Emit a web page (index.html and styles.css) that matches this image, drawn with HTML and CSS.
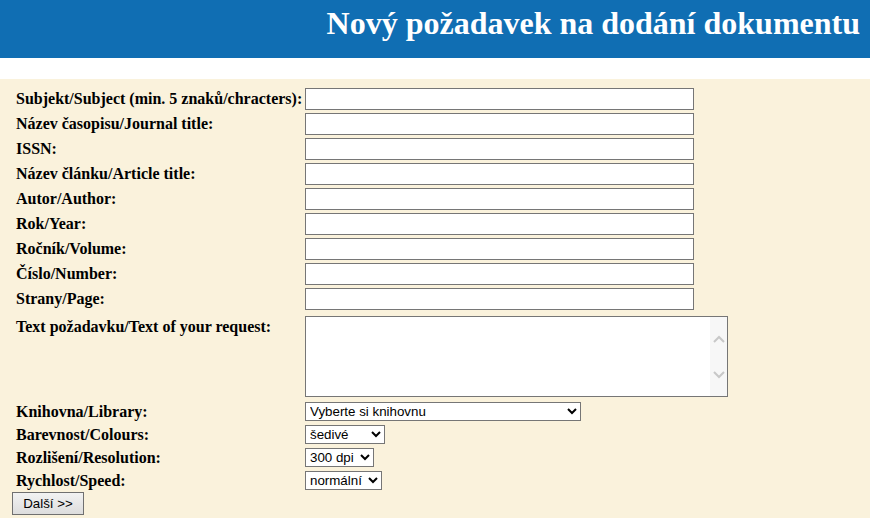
FILE: index.html
```html
<!DOCTYPE html>
<html lang="cs">
<head>
<meta charset="utf-8">
<title>Nový požadavek na dodání dokumentu</title>
<link rel="stylesheet" href="styles.css">
</head>
<body>
<header class="banner">
  <h1 class="banner-title">Nový požadavek na dodání dokumentu</h1>
</header>
<form class="request-form">
  <div class="row"><label class="lbl">Subjekt/Subject (min. 5 znaků/chracters):</label><input class="txt" type="text"></div>
  <div class="row"><label class="lbl">Název časopisu/Journal title:</label><input class="txt" type="text"></div>
  <div class="row"><label class="lbl">ISSN:</label><input class="txt" type="text"></div>
  <div class="row"><label class="lbl">Název článku/Article title:</label><input class="txt" type="text"></div>
  <div class="row"><label class="lbl">Autor/Author:</label><input class="txt" type="text"></div>
  <div class="row"><label class="lbl">Rok/Year:</label><input class="txt" type="text"></div>
  <div class="row"><label class="lbl">Ročník/Volume:</label><input class="txt" type="text"></div>
  <div class="row"><label class="lbl">Číslo/Number:</label><input class="txt" type="text"></div>
  <div class="row"><label class="lbl">Strany/Page:</label><input class="txt" type="text"></div>
  <div class="row row-area"><label class="lbl">Text požadavku/Text of your request:</label>
    <div class="area-box">
      <textarea class="area"></textarea>
      <div class="scrollbar" aria-hidden="true">
        <svg class="chev" width="12" height="8" viewBox="0 0 12 8"><path d="M1 7 L6 2 L11 7" fill="none" stroke="#c8c8c8" stroke-width="2"/></svg>
        <svg class="chev" width="12" height="8" viewBox="0 0 12 8"><path d="M1 1 L6 6 L11 1" fill="none" stroke="#c8c8c8" stroke-width="2"/></svg>
      </div>
    </div>
  </div>
  <div class="row row-sel row-first-sel"><label class="lbl">Knihovna/Library:</label>
    <select class="sel sel-lib"><option>Vyberte si knihovnu</option></select></div>
  <div class="row row-sel"><label class="lbl">Barevnost/Colours:</label>
    <select class="sel sel-col"><option>šedivé</option><option>barevné</option></select></div>
  <div class="row row-sel"><label class="lbl">Rozlišení/Resolution:</label>
    <select class="sel sel-res"><option>300 dpi</option><option>600 dpi</option></select></div>
  <div class="row row-sel"><label class="lbl">Rychlost/Speed:</label>
    <select class="sel sel-spd"><option>normální</option><option>rychlá</option></select></div>
  <div class="actions"><button class="btn" type="button">Další &gt;&gt;</button></div>
</form>
</body>
</html>
```
FILE: styles.css
```css
html, body {
  margin: 0;
  padding: 0;
  background: #ffffff;
}

body {
  font-family: "Liberation Serif", "Times New Roman", serif;
  color: #000;
}

.banner {
  background: #106eb3;
  height: 58px;
  margin-bottom: 21px;
  text-align: right;
}

.banner-title {
  margin: 0;
  padding: 5px 10px 0 0;
  font-size: 32px;
  line-height: 37px;
  font-weight: bold;
  color: #ffffff;
}

.request-form {
  display: flex;
  flex-direction: column;
  align-items: flex-start;
  background: #faf2dc;
  padding: 9px 0 4px 12px;
}

.row {
  display: grid;
  grid-template-columns: 293px auto;
  align-items: center;
  margin-bottom: 3px;
}

.lbl {
  padding-left: 4px;
  font-size: 16px;
  font-weight: bold;
  line-height: 18px;
}

.txt {
  box-sizing: border-box;
  width: 389px;
  height: 22px;
  margin: 0;
  border: 1px solid #767676;
  border-radius: 0;
  background: #fff;
  font-family: "Liberation Sans", Arial, sans-serif;
  font-size: 13.33px;
}

.row-area {
  align-items: start;
  margin-top: 3px;
}

.row-area .lbl {
  padding-top: 2px;
}

.area-box {
  box-sizing: border-box;
  display: flex;
  width: 423px;
  height: 81px;
  border: 1px solid #767676;
  background: #fff;
}

.area {
  flex: 1;
  margin: 0;
  padding: 2px;
  border: none;
  outline: none;
  resize: none;
  background: #fff;
  overflow: hidden;
  font-family: "Liberation Mono", monospace;
  font-size: 13.33px;
}

.scrollbar {
  width: 17px;
  background: #f7f7f7;
  display: flex;
  flex-direction: column;
  align-items: center;
  justify-content: space-between;
  padding: 18px 0 17px;
  box-sizing: border-box;
}

.chev {
  display: block;
}

.row-sel {
  margin-bottom: 4px;
}

.row-first-sel {
  margin-top: 2px;
}

.sel {
  box-sizing: border-box;
  height: 19px;
  margin: 0;
  padding: 0;
  border: 1px solid #767676;
  border-radius: 0;
  background: #fff;
  color: #000;
  font-family: "Liberation Sans", Arial, sans-serif;
  font-size: 13.33px;
}

.sel-lib { width: 276px; }
.sel-col { width: 80px; }
.sel-res { width: 69px; }
.sel-spd { width: 77px; }

.actions {
  margin-top: -2px;
}

.btn {
  box-sizing: border-box;
  width: 72px;
  height: 23px;
  margin: 0;
  padding: 0;
  border: 1px solid #707070;
  border-radius: 0;
  background: linear-gradient(#f2f2f2, #dddddd);
  color: #000;
  font-family: "Liberation Sans", Arial, sans-serif;
  font-size: 13.33px;
}
```
